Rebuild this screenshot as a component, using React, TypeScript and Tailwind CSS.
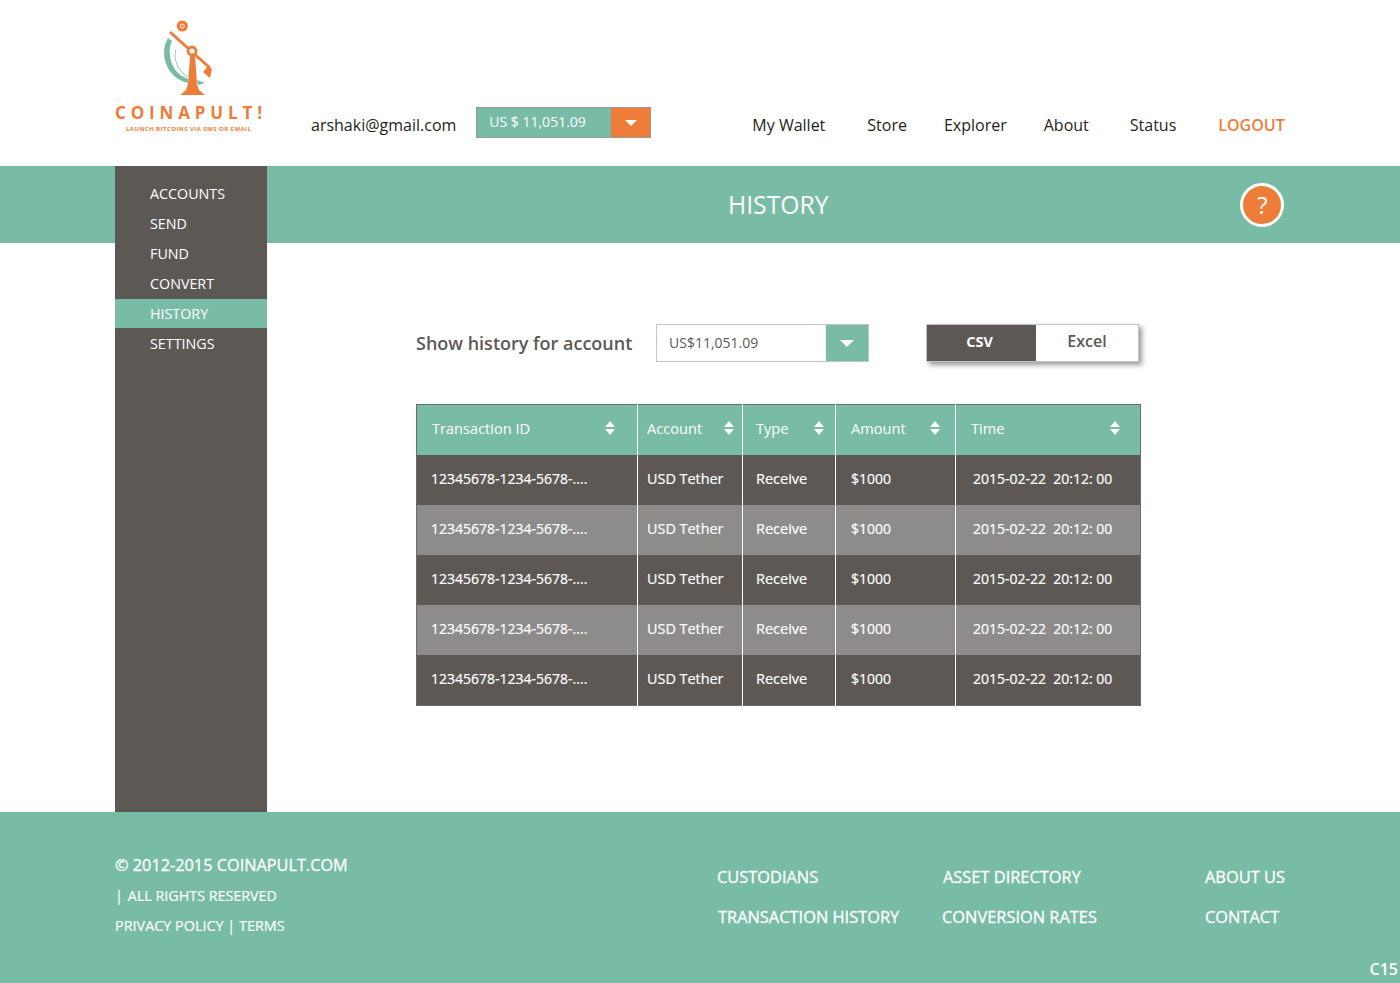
import React from 'react';

const rows = [0, 1, 2, 3, 4];

function Logo() {
  return (
    <div className="w-[152px] flex flex-col items-start">
      <svg width="152" height="82" viewBox="115 20 152 82" className="block">
        <path d="M168 38 C163 46 163 58 167 66 C171 75 179 81 188 83 L188 79 C180 76 175 71 172 64 C169 56 169 47 172 41 Z" fill="#78bca6" />
        <path d="M176 49 C173 60 178 71 188 77" fill="none" stroke="#78bca6" strokeWidth="0.8" />
        <path d="M197 80 L205 83 L198 85 Z" fill="#78bca6" />
        <circle cx="182.3" cy="26" r="5.6" fill="#ee7d39" />
        <circle cx="182.3" cy="26" r="2" fill="none" stroke="#fff" strokeWidth="1" />
        <path d="M170 32 L210 68" stroke="#ee7d39" strokeWidth="3" />
        <path d="M203 72 L208 66 L212 69 L210 78 Z" fill="#ee7d39" />
        <circle cx="192" cy="51" r="4" fill="#fff" stroke="#ee7d39" strokeWidth="2.8" />
        <path d="M190 56 L195 56 L197 84 L199 90 L205 95 L180 95 L186 90 L188 84 Z" fill="#ee7d39" />
      </svg>
      <div className="mt-[1px] font-['Open_Sans',sans-serif] font-bold text-[17px] leading-[20px] tracking-[4.85px] text-[#ee7d39] whitespace-nowrap">
        COINAPULT!
      </div>
      <div className="ml-[11px] mt-[2px] font-['Open_Sans',sans-serif] font-bold text-[6px] leading-[8px] tracking-[0.45px] text-[#ee7d39] whitespace-nowrap">
        LAUNCH BITCOINS VIA SMS OR EMAIL
      </div>
    </div>
  );
}

function Caret({ className }: { className: string }) {
  return <span className={`w-0 h-0 border-x-[6px] border-x-transparent border-t-[6px] ${className}`} />;
}

function Sort() {
  return (
    <svg width="10" height="14" viewBox="0 0 10 14" className="block shrink-0">
      <path d="M5 0 L10 6 L0 6 Z M0 8 L10 8 L5 14 Z" fill="#fff" />
    </svg>
  );
}

export default function App() {
  return (
    <div className="w-[1400px] h-[983px] bg-white font-['Open_Sans',sans-serif] relative overflow-hidden">
      {/* top bar */}
      <header className="h-[166px] pl-[115px] flex">
        <div className="pt-[20px]">
          <Logo />
        </div>
        <div className="ml-[44px] pt-[107px] flex items-start">
          <span className="text-[16px] leading-[36px] text-[#231f20] whitespace-nowrap">arshaki@gmail.com</span>
          <div className="ml-[20px] w-[175px] h-[31px] border border-[#999] bg-[#78bca6] flex">
            <span className="flex-1 pl-[12px] text-[14px] leading-[28px] text-white">US $ 11,051.09</span>
            <span className="w-[39px] bg-[#ee7d39] flex items-center justify-center">
              <Caret className="border-t-white" />
            </span>
          </div>
        </div>
        <nav className="pt-[113px] flex text-[16px] leading-[24px] text-[#231f20] whitespace-nowrap">
          <a className="ml-[101px]">My Wallet</a>
          <a className="ml-[42px]">Store</a>
          <a className="ml-[37px]">Explorer</a>
          <a className="ml-[37px]">About</a>
          <a className="ml-[41px]">Status</a>
          <a className="ml-[42px] text-[#ee7d39] font-semibold">LOGOUT</a>
        </nav>
      </header>

      <div className="flex h-[646px]">
        <div className="w-[115px] h-[77px] bg-[#78bca6]" />
        <aside className="w-[152px] bg-[#5e5855] pt-[13px] text-[14.3px] text-white">
          <div className="h-[30px] pl-[35px] leading-[30px]">ACCOUNTS</div>
          <div className="h-[30px] pl-[35px] leading-[30px]">SEND</div>
          <div className="h-[30px] pl-[35px] leading-[30px]">FUND</div>
          <div className="h-[30px] pl-[35px] leading-[30px]">CONVERT</div>
          <div className="h-[29px] pl-[35px] leading-[29px] bg-[#78bca6]">HISTORY</div>
          <div className="h-[30px] pl-[35px] leading-[32px]">SETTINGS</div>
        </aside>
        <main className="flex-1 flex flex-col">
          <div className="h-[77px] bg-[#78bca6] flex items-center pl-[461px]">
            <h1 className="text-[24.7px] leading-[32px] text-white whitespace-nowrap">HISTORY</h1>
            <div className="ml-[412px] w-[44px] h-[44px] rounded-full border-[3px] border-white bg-[#ee7d39] flex items-center justify-center text-[24px] text-white">
              ?
            </div>
          </div>

          <div className="pl-[149px] pt-[81px] flex items-start">
            <span className="w-[240px] text-[18px] font-semibold leading-[38px] text-[#5e5855] whitespace-nowrap">
              Show history for account
            </span>
            <div className="w-[213px] h-[38px] border border-[#c4c4c4] flex">
              <span className="flex-1 pl-[12px] text-[14px] leading-[35px] text-[#5e5855]">US$11,051.09</span>
              <span className="w-[42px] bg-[#78bca6] flex items-center justify-center">
                <Caret className="border-t-white border-x-[7px] border-t-[7px]" />
              </span>
            </div>
            <div className="ml-[57px] w-[213px] h-[38px] border border-[#c4c4c4] flex shadow-[3px_3px_5px_rgba(0,0,0,0.4)]">
              <span className="w-[109px] pr-[4px] bg-[#5e5855] text-white text-[14.5px] font-bold text-center leading-[33px]">CSV</span>
              <span className="flex-1 bg-white text-[#5e5855] text-[16px] font-semibold text-center leading-[33px]">Excel</span>
            </div>
          </div>

          <table className="ml-[149px] mt-[42px] w-[725px] table-fixed border-collapse border border-[#6b6b6b] text-[14px] leading-[20px] text-white">
            <colgroup>
              <col className="w-[221px]" />
              <col className="w-[105px]" />
              <col className="w-[93px]" />
              <col className="w-[120px]" />
              <col className="w-[185px]" />
            </colgroup>
            <thead>
              <tr className="h-[50px] bg-[#78bca6] text-[14.6px]">
                <th className="font-normal text-left p-0 border-r border-white">
                  <div className="pl-[15px] pr-[22px] pb-[3px] flex items-center justify-between">Transaction ID<Sort /></div>
                </th>
                <th className="font-normal text-left p-0 border-r border-white">
                  <div className="pl-[9px] pr-[8px] pb-[3px] flex items-center justify-between">Account<Sort /></div>
                </th>
                <th className="font-normal text-left p-0 border-r border-white">
                  <div className="pl-[13px] pr-[11px] pb-[3px] flex items-center justify-between">Type<Sort /></div>
                </th>
                <th className="font-normal text-left p-0 border-r border-white">
                  <div className="pl-[15px] pr-[15px] pb-[3px] flex items-center justify-between">Amount<Sort /></div>
                </th>
                <th className="font-normal text-left p-0">
                  <div className="pl-[15px] pr-[20px] pb-[3px] flex items-center justify-between">Time<Sort /></div>
                </th>
              </tr>
            </thead>
            <tbody>
              {rows.map((i) => (
                <tr key={i} className={i % 2 === 0 ? (i === 4 ? 'h-[51px] bg-[#5e5855]' : 'h-[50px] bg-[#5e5855]') : 'h-[50px] bg-[#8e8c8a]'}>
                  <td className="pl-[14px] pb-[2px] border-r border-white [-webkit-text-stroke:0.2px_white]">12345678-1234-5678-....</td>
                  <td className="pl-[9px] pb-[2px] text-[14.4px] border-r border-white [-webkit-text-stroke:0.2px_white]">USD Tether</td>
                  <td className="pl-[13px] pb-[2px] text-[14.5px] border-r border-white [-webkit-text-stroke:0.2px_white]">Receive</td>
                  <td className="pl-[15px] pb-[2px] border-r border-white [-webkit-text-stroke:0.2px_white]">$1000</td>
                  <td className="pl-[17px] pb-[2px] whitespace-pre [-webkit-text-stroke:0.2px_white]">2015-02-22  20:12: 00</td>
                </tr>
              ))}
            </tbody>
          </table>
        </main>
      </div>

      <footer className="h-[171px] bg-[#78bca6] pl-[115px] flex text-white whitespace-nowrap">
        <div className="w-[602px] pt-[41px]">
          <div className="text-[16.3px] leading-[24px] [-webkit-text-stroke:0.3px_white]">© 2012-2015 COINAPULT.COM</div>
          <div className="mt-[8px] text-[14.3px] leading-[22px] [-webkit-text-stroke:0.15px_white]">
            <span className="mr-[5px]">|</span>ALL RIGHTS RESERVED
          </div>
          <div className="mt-[8px] text-[14.4px] leading-[22px] [-webkit-text-stroke:0.15px_white]">PRIVACY POLICY | TERMS</div>
        </div>
        <div className="pt-[53px] text-[16.4px] leading-[24px] w-[226px] [-webkit-text-stroke:0.3px_white]">
          <div>CUSTODIANS</div>
          <div className="mt-[16px] ml-[1px]">TRANSACTION HISTORY</div>
        </div>
        <div className="pt-[53px] text-[16.4px] leading-[24px] w-[262px] [-webkit-text-stroke:0.3px_white]">
          <div>ASSET DIRECTORY</div>
          <div className="mt-[16px] -ml-[1px]">CONVERSION RATES</div>
        </div>
        <div className="pt-[53px] text-[16.4px] leading-[24px] [-webkit-text-stroke:0.3px_white]">
          <div>ABOUT US</div>
          <div className="mt-[16px]">CONTACT</div>
        </div>
      </footer>
      <span className="absolute right-[2px] bottom-[2px] text-[16px] font-semibold leading-[24px] text-white">C15</span>
    </div>
  );
}
